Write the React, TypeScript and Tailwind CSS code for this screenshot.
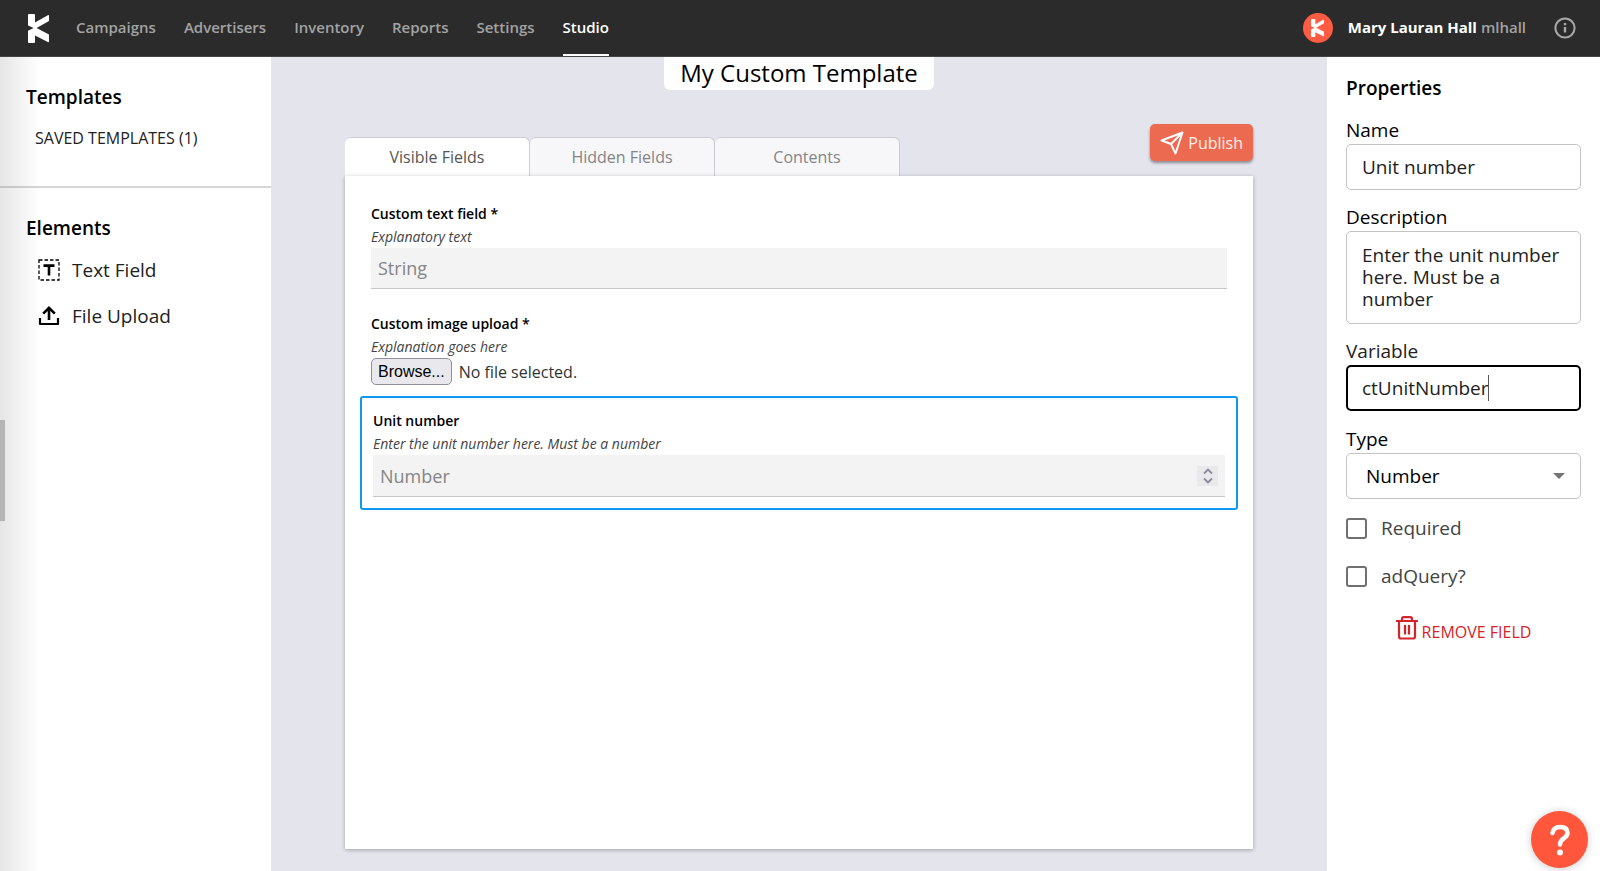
import { useRef, useState } from 'react';

const navItems = ['Campaigns', 'Advertisers', 'Inventory', 'Reports', 'Settings', 'Studio'];
const tabs = ['Visible Fields', 'Hidden Fields', 'Contents'];

function KLogo({ className }: { className?: string }) {
  return (
    <svg viewBox="0 0 21 29" className={className} fill="currentColor" aria-hidden="true">
      <path d="M0 1Q0 0 1 0H6Q7 0 7 1V8.500L19.800 1.200Q21 .6 21 1.800V7L8.600 14 21 20.500V27.200Q21 28.600 19.800 28L7 21.500V28Q7 29 6 29H1Q0 29 0 28V16.800L5.600 14 0 11.600Z" />
    </svg>
  );
}

function Header() {
  return (
    <header className="flex h-[57px] shrink-0 items-center bg-[#2b2b2b] border-b border-[#444] pl-7 pr-6">
      <a href="#" aria-label="Home" className="mr-[27px] text-white">
        <KLogo className="h-[29px] w-[21px]" />
      </a>
      <nav className="flex h-full gap-7 text-[15px] font-semibold text-[#a3a3a3]">
        {navItems.map((item) => (
          <a
            key={item}
            href="#"
            className={
              item === 'Studio'
                ? 'flex items-center border-b-2 border-white text-white'
                : 'flex items-center border-b-2 border-transparent'
            }
          >
            {item}
          </a>
        ))}
      </nav>
      <div className="ml-auto flex items-center text-[15px]">
        <span className="mr-[15px] flex h-[30px] w-[30px] items-center justify-center rounded-full bg-[#ff5c43] text-white">
          <KLogo className="h-[18px] w-[13px]" />
        </span>
        <span className="pb-0.5 font-bold text-white">Mary Lauran Hall</span>
        <span className="ml-1 pb-0.5 font-semibold text-[#a3a3a3]">mlhall</span>
        <button type="button" aria-label="Information" className="ml-7 text-[#a8a8a8]">
          <svg viewBox="0 0 22 22" className="h-[22px] w-[22px]" fill="none" stroke="currentColor" strokeWidth="2">
            <circle cx="11" cy="11" r="9.6" />
            <path d="M11 10v5.5M11 6v2.2" strokeWidth="2.4" />
          </svg>
        </button>
      </div>
    </header>
  );
}

function Sidebar() {
  return (
    <aside className="relative w-[271px] shrink-0 bg-white">
      <div className="h-[131px] border-b-2 border-[#d6d6d6] pl-[26px] pt-7">
        <h2 className="text-[19px] leading-6 font-semibold">Templates</h2>
        <button type="button" className="mt-[17px] ml-[9px] block text-base leading-6 text-[#222]">
          SAVED TEMPLATES (1)
        </button>
      </div>
      <div className="pl-[26px] pt-7">
        <h2 className="text-[19px] leading-6 font-semibold">Elements</h2>
        <ul className="ml-3 mt-[18px] space-y-[22px] text-[19px] leading-6 text-[#222]">
          <li>
            <button type="button" className="flex items-center gap-3">
              <svg viewBox="0 0 22 22" className="h-[22px] w-[22px] text-black" fill="none" stroke="currentColor">
                <rect x="1" y="1" width="20" height="20" strokeWidth="1.3" strokeDasharray="3.500 2" />
                <path d="M5.5 6.6h11M11 6.6V16.5" strokeWidth="2.6" />
              </svg>
              Text Field
            </button>
          </li>
          <li>
            <button type="button" className="flex items-center gap-3">
              <svg viewBox="0 0 22 22" className="h-[22px] w-[22px] text-black" fill="none" stroke="currentColor">
                <path d="M2 13v6h18v-6" strokeWidth="2.2" strokeLinejoin="round" />
                <path d="M11 15V3.2M5.2 8.6 11 2.8l5.800 5.8" strokeWidth="2.6" />
              </svg>
              File Upload
            </button>
          </li>
        </ul>
      </div>

      {/* edge shade and the drag handle of the collapsed drawer */}
      <div className="pointer-events-none absolute inset-y-0 left-0 w-10 bg-linear-to-r from-black/10 to-transparent" />
      <div className="absolute left-0 top-[363px] h-[101px] w-[5px] bg-[#b5b5b5]" />
    </aside>
  );
}

function Editor() {
  const [activeTab, setActiveTab] = useState('Visible Fields');
  const fileRef = useRef<HTMLInputElement>(null);
  const numberRef = useRef<HTMLInputElement>(null);

  return (
    <main className="flex min-w-0 flex-1 flex-col bg-[#e4e4ed] px-[74px] pb-[22px]">
      <h1 className="self-center rounded-b-md bg-white px-4 pt-px pb-[3px] text-2xl leading-[29px]">My Custom Template</h1>

      <div className="mt-[34px] flex items-start justify-between">
        <div role="tablist" className="mt-[13px] flex h-[39px]">
          {tabs.map((tab) => (
            <button
              key={tab}
              type="button"
              role="tab"
              aria-selected={activeTab === tab}
              onClick={() => setActiveTab(tab)}
              className={
                activeTab === tab
                  ? 'w-[185px] rounded-t-md border-t border-r border-[#ccccd2] bg-white text-base text-[#555]'
                  : 'w-[185px] rounded-t-md border-t border-r border-[#ccccd2] bg-[#f7f7fa] text-base text-[#858585]'
              }
            >
              {tab}
            </button>
          ))}
        </div>
        <button
          type="button"
          className="flex h-[37px] items-center gap-1 rounded-[5px] bg-[#ec6a50] px-[10px] text-base text-[#fff0ec] shadow-[0_2px_3px_rgba(0,0,0,0.4)]"
        >
          <svg viewBox="0 0 24 24" className="h-6 w-6" fill="none" stroke="white" strokeWidth="1.9" strokeLinejoin="round">
            <path d="M22.500 1.500 1.500 9.500 11 13 15.500 22.500ZM22.500 1.500 11 13" />
          </svg>
          Publish
        </button>
      </div>

      <section className="flex-1 bg-white px-[26px] pt-[26px] shadow-[0_1px_4px_rgba(0,0,0,0.3)]">
        <label htmlFor="custom-text" className="block text-sm leading-6 font-semibold">
          Custom text field *
        </label>
        <p className="text-sm leading-[22px] text-[#444] italic">Explanatory text</p>
        <input
          id="custom-text"
          type="text"
          placeholder="String"
          className="block h-[41px] w-full border-b border-[#c8c8c8] bg-[#f3f3f3] px-[7px] text-lg outline-none placeholder:text-[#858585]"
        />

        <label htmlFor="custom-image" className="mt-[23px] block text-sm leading-6 font-semibold">
          Custom image upload *
        </label>
        <p className="text-sm leading-[22px] text-[#444] italic">Explanation goes here</p>
        <div className="flex items-center gap-[7px]">
          <input id="custom-image" ref={fileRef} type="file" className="hidden" />
          <button
            type="button"
            onClick={() => fileRef.current?.click()}
            className="h-[27px] rounded-[5px] border border-[#8f8f9d] bg-[#e9e9ed] px-[6px] font-['Liberation_Sans',Arial,sans-serif] text-base leading-6"
          >
            Browse...
          </button>
          <span className="text-base leading-6 text-[#333]">No file selected.</span>
        </div>

        <div className="-mx-[11px] mt-[11px] rounded-[3px] border-2 border-[#1098ec] px-[11px] pt-[11px] pb-[11px]">
          <label htmlFor="unit-number" className="block text-sm leading-6 font-semibold">
            Unit number
          </label>
          <p className="text-sm leading-[22px] text-[#444] italic">Enter the unit number here. Must be a number</p>
          <div className="flex h-[42px] items-center border-b border-[#c8c8c8] bg-[#f3f3f3] pr-[7px] pl-[7px]">
            <input
              id="unit-number"
              ref={numberRef}
              type="number"
              placeholder="Number"
              className="min-w-0 flex-1 appearance-none bg-transparent text-lg outline-none [appearance:textfield] placeholder:text-[#858585]"
            />
            <div className="flex w-[21px] flex-col bg-[#e9e9ed] text-[#8a8a96]">
              <button type="button" aria-label="Increase" onClick={() => numberRef.current?.stepUp()} className="flex h-[10px] justify-center">
                <svg viewBox="0 0 12 10" className="h-[10px] w-3" fill="none" stroke="currentColor" strokeWidth="1.8">
                  <path d="M2 7.500 6 3.500l4 4" />
                </svg>
              </button>
              <button type="button" aria-label="Decrease" onClick={() => numberRef.current?.stepDown()} className="flex h-[10px] justify-center">
                <svg viewBox="0 0 12 10" className="h-[10px] w-3" fill="none" stroke="currentColor" strokeWidth="1.8">
                  <path d="m2 2.500 4 4 4-4" />
                </svg>
              </button>
            </div>
          </div>
        </div>
      </section>
    </main>
  );
}

function Properties() {
  const [name, setName] = useState('Unit number');
  const [description, setDescription] = useState('Enter the unit number here. Must be a number');
  const [variable, setVariable] = useState('ctUnitNumber');

  return (
    <aside className="w-[273px] shrink-0 bg-white pt-[19px] pr-[19px] pl-[19px] text-[19px]">
      <h2 className="leading-6 font-semibold">Properties</h2>

      <label htmlFor="prop-name" className="mt-[18px] block leading-6">
        Name
      </label>
      <input
        id="prop-name"
        value={name}
        onChange={(e) => setName(e.target.value)}
        className="mt-0.5 block h-[46px] w-full rounded-[5px] border border-[#c4c4c4] px-[15px] text-[#222] outline-none"
      />

      <label htmlFor="prop-description" className="mt-[15px] block leading-6">
        Description
      </label>
      <textarea
        id="prop-description"
        value={description}
        onChange={(e) => setDescription(e.target.value)}
        className="mt-0.5 block h-[93px] w-full resize-none rounded-[5px] border border-[#c4c4c4] px-[15px] py-3 leading-[22px] text-[#222] outline-none"
      />

      <label htmlFor="prop-variable" className="mt-[15px] block leading-6 text-[#222]">
        Variable
      </label>
      <div className="relative mt-0.5">
        <input
          id="prop-variable"
          value={variable}
          onChange={(e) => setVariable(e.target.value)}
          className="block h-[46px] w-full rounded-[5px] border-2 border-black px-[14px] text-[#222] outline-none"
        />
        <span className="absolute top-[10px] left-[142px] h-[26px] w-px bg-[#555]" />
      </div>

      <label htmlFor="prop-type" className="mt-4 block leading-6">
        Type
      </label>
      <div className="relative mt-0.5">
        <select
          id="prop-type"
          className="block h-[46px] w-full appearance-none rounded-[5px] border border-[#c4c4c4] bg-white px-[19px] outline-none"
        >
          <option>Number</option>
          <option>String</option>
        </select>
        <svg viewBox="0 0 12 6" className="pointer-events-none absolute top-5 right-4 h-[6px] w-3" fill="#757575">
          <path d="M0 0h12L6 6Z" />
        </svg>
      </div>

      <div className="mt-[17px] space-y-6 text-[#444]">
        <label className="flex items-center gap-[14px] leading-6">
          <input type="checkbox" className="h-[21px] w-[21px] appearance-none rounded-[3px] border-2 border-[#707070] checked:bg-[#707070]" />
          Required
        </label>
        <label className="flex items-center gap-[14px] leading-6">
          <input type="checkbox" className="h-[21px] w-[21px] appearance-none rounded-[3px] border-2 border-[#707070] checked:bg-[#707070]" />
          adQuery?
        </label>
      </div>

      <button type="button" className="mx-auto mt-7 flex items-start gap-1 text-base leading-5 text-[#d3242b]">
        <svg viewBox="0 0 22 24" className="h-6 w-[22px]" fill="none" stroke="currentColor" strokeWidth="2.200" strokeLinejoin="round">
          <path d="M0 5h22M3 5v15.500q0 2 2 2h12q2 0 2-2V5M6 5V3q0-1.800 1.800-1.800h6.400Q16 1.200 16 3V5" />
          <path d="M9 9v9.500M13 9v9.500" />
        </svg>
        <span className="pt-[6px]">REMOVE FIELD</span>
      </button>
    </aside>
  );
}

export default function App() {
  return (
    <div className="flex min-h-screen flex-col font-['Open_Sans','Noto_Sans',sans-serif] text-black">
      <Header />
      <div className="flex flex-1">
        <Sidebar />
        <Editor />
        <Properties />
      </div>
      <button
        type="button"
        aria-label="Help"
        className="fixed right-3 bottom-[3px] flex h-[57px] w-[57px] items-center justify-center rounded-full bg-[#ff563c] shadow-[0_1px_8px_rgba(0,0,0,0.2)]"
      >
        <svg viewBox="0 0 22 32" className="h-8 w-[22px]" fill="none" stroke="white" strokeWidth="4.500" strokeLinecap="round">
          <path d="M3.500 9Q4.500 3 11 3q7.500 0 7.500 6 0 3-4 5.700-3.500 2.300-3.500 5.800" />
          <circle cx="11" cy="28.500" r="3" fill="white" stroke="none" />
        </svg>
      </button>
    </div>
  );
}
